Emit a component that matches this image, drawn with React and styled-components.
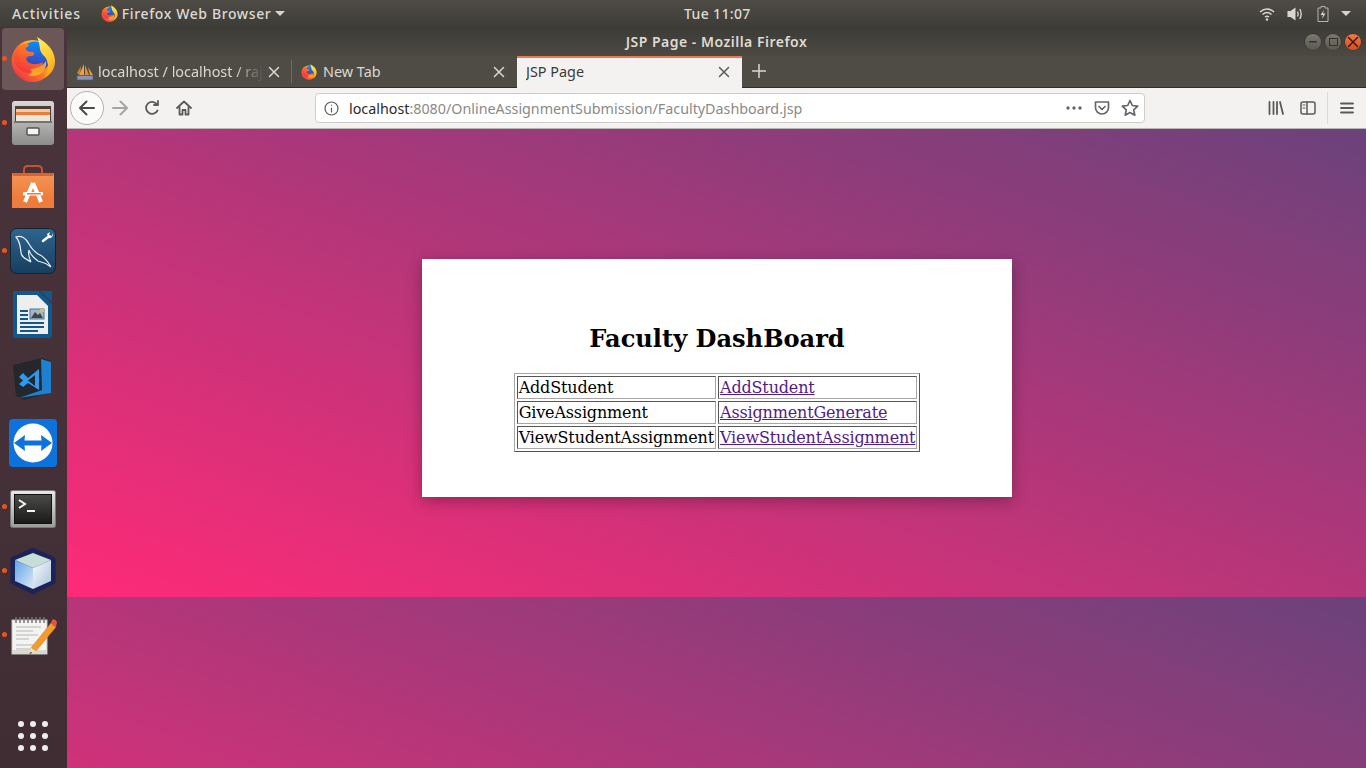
import React from "react";
import styled, { createGlobalStyle } from "styled-components";

const Global = createGlobalStyle`
  html, body { margin: 0; padding: 0; height: 100%; overflow: hidden; background: #3c3b37; }
  * { box-sizing: border-box; }
`;

const uiFont = `"Noto Sans", "Open Sans", "Liberation Sans", sans-serif`;

const Screen = styled.div`
  width: 1366px;
  height: 768px;
  display: flex;
  flex-direction: column;
  overflow: hidden;
  font-family: ${uiFont};
`;

const TopBar = styled.header`
  height: 27px;
  flex: none;
  display: grid;
  grid-template-columns: 672px auto 1fr;
  align-items: center;
  padding-left: 12px;
  background: linear-gradient(#4f4c46, #3d3c37);
  color: #dcdad4;
  font-size: 14px;
  font-weight: 500;
  letter-spacing: 0.35px;
`;

const BarGroup = styled.div`
  display: flex;
  align-items: center;
`;

const ActivitiesLabel = styled.span`
  letter-spacing: 0.85px;
`;

const AppMenu = styled.div`
  display: flex;
  align-items: center;
  margin-left: 20px;
  gap: 4px;
  letter-spacing: 0.62px;
`;

const Caret = styled.span`
  width: 0;
  height: 0;
  border-left: 5px solid transparent;
  border-right: 5px solid transparent;
  border-top: 5px solid #d6d4ce;
`;

const Tray = styled.div`
  display: flex;
  align-items: center;
  justify-content: flex-end;
  padding-right: 15px;
  gap: 12px;
`;

const BatteryGlyph = styled.svg`
  margin-left: 2px;
`;

const Desktop = styled.div`
  flex: 1;
  display: flex;
  min-height: 0;
`;

const Dock = styled.nav`
  width: 67px;
  flex: none;
  display: flex;
  flex-direction: column;
  align-items: flex-start;
  gap: 2px;
  padding: 1px 0 17px 2px;
  background: linear-gradient(#4a343b, #402d34);
`;

const DockItem = styled.div`
  position: relative;
  width: 62px;
  height: 62px;
  border-radius: 4px;
  display: flex;
  align-items: center;
  justify-content: center;
  background: ${(p) => (p.$active ? "#6b5658" : "transparent")};
  ${(p) =>
    p.$running &&
    `&::before {
      content: "";
      position: absolute;
      left: 0;
      top: 28px;
      width: 5px;
      height: 5px;
      border-radius: 50%;
      background: #e95420;
    }`}
`;

const AppGrid = styled.div`
  margin: auto 0 0 16px;
  display: grid;
  grid-template-columns: repeat(3, 6px);
  gap: 6px;
`;

const AppDot = styled.span`
  width: 6px;
  height: 6px;
  border-radius: 50%;
  background: #eeeeee;
`;

const Browser = styled.main`
  flex: 1;
  min-width: 0;
  display: flex;
  flex-direction: column;
`;

const TitleBar = styled.div`
  height: 29px;
  flex: none;
  display: grid;
  grid-template-columns: 1fr auto 1fr;
  align-items: center;
  background: linear-gradient(#3c3b36, #4c4943);
  color: #dfdbd2;
  font-size: 14px;
  font-weight: 600;
  letter-spacing: 0.5px;
`;

const WindowTitle = styled.span`
  grid-column: 2;
`;

const WinButtons = styled.div`
  grid-column: 3;
  display: flex;
  justify-content: flex-end;
  gap: 4px;
  padding-right: 5px;
`;

const WinButton = styled.span`
  width: 16px;
  height: 16px;
  border-radius: 50%;
  display: flex;
  align-items: center;
  justify-content: center;
  background: ${(p) =>
    p.$close
      ? "linear-gradient(#f07a4a, #dd4c1c)"
      : "linear-gradient(#7b7870, #5b5850)"};
  box-shadow: 0 0 0 0.5px rgba(0, 0, 0, 0.35);
`;

const TabStrip = styled.div`
  height: 32px;
  flex: none;
  display: flex;
  align-items: stretch;
  background: #4f4c46;
  border-bottom: 1px solid #2f2e2a;
  color: #dbd8d1;
  font-size: 14.4px;
`;

const Tab = styled.div`
  width: ${(p) => p.$w}px;
  flex: none;
  display: flex;
  align-items: center;
  padding: 0 ${(p) => p.$pr || 12}px ${(p) => (p.$active ? 3 : 2)}px 9px;
  gap: ${(p) => p.$gap || 6}px;
  background: ${(p) => (p.$active ? "#f3f2f0" : "transparent")};
  color: ${(p) => (p.$active ? "#3a3a38" : "inherit")};
  border-top: 2px solid ${(p) => (p.$active ? "#ec7a50" : "transparent")};
  margin-bottom: ${(p) => (p.$active ? "-1px" : "0")};
`;

const TabLabel = styled.span`
  flex: 1;
  min-width: 0;
  white-space: nowrap;
  overflow: hidden;
  ${(p) =>
    p.$fade &&
    `-webkit-mask-image: linear-gradient(to right, #000 82%, transparent 100%);
     mask-image: linear-gradient(to right, #000 82%, transparent 100%);`}
`;

const TabDivider = styled.span`
  width: 1px;
  flex: none;
  margin: 4px 0 4px;
  background: #6e6b64;
`;

const NewTab = styled.div`
  width: 34px;
  padding-bottom: 2px;
  display: flex;
  align-items: center;
  justify-content: center;
`;

const NavBar = styled.div`
  height: 41px;
  flex: none;
  display: flex;
  align-items: center;
  background: #f3f2f0;
  border-bottom: 1px solid #b9b6b3;
  padding-left: 3px;
  color: #5a5a58;
`;

const BackButton = styled.div`
  width: 34px;
  height: 34px;
  flex: none;
  border-radius: 50%;
  background: #fbfbfa;
  border: 1px solid #b4b2af;
  display: flex;
  align-items: center;
  justify-content: center;
`;

const NavIcon = styled.div`
  width: 32px;
  flex: none;
  display: flex;
  align-items: center;
  justify-content: center;
  opacity: ${(p) => (p.$dim ? 0.45 : 1)};
`;

const UrlBox = styled.div`
  width: 830px;
  height: 30px;
  flex: none;
  margin-left: 115px;
  display: flex;
  align-items: center;
  padding: 0 0 0 8px;
  background: #ffffff;
  border: 1px solid #cfcdca;
  border-radius: 4px;
  font-size: 14.3px;
`;

const UrlText = styled.div`
  flex: 1;
  margin-left: 10px;
  white-space: nowrap;
  color: #8a8a88;
`;

const UrlHost = styled.span`
  color: #2b2b2a;
`;

const UrlAction = styled.div`
  width: 28px;
  flex: none;
  display: flex;
  justify-content: center;
`;

const NavRight = styled.div`
  margin-left: auto;
  display: flex;
  align-items: center;
  height: 100%;
  padding-right: 3px;
`;

const NavSeparator = styled.span`
  width: 1px;
  height: 32px;
  margin: 0 3px;
  background: #dcdad7;
`;

const Page = styled.section`
  flex: 1;
  min-height: 0;
  display: flex;
  justify-content: center;
  align-items: flex-start;
  padding-top: 130px;
  background: linear-gradient(to top right, #ff2a78, #6b427b);
  background-size: 100% 468px;
  background-repeat: repeat;
`;

const Card = styled.div`
  width: 590px;
  height: 238px;
  padding: 65px 0 0 1px;
  background: #ffffff;
  box-shadow: 0 4px 14px rgba(0, 0, 0, 0.3);
  font-family: "DejaVu Serif", serif;
  font-size: 16px;
  line-height: 19px;
  color: #000;
  display: flex;
  flex-direction: column;
  align-items: center;
`;

const Heading = styled.h2`
  margin: 0 0 19px;
  font-size: 24.1px;
  line-height: 30px;
  font-weight: 700;
`;

const Table = styled.table`
  border-collapse: separate;
  border-spacing: 2px;
  border: 1px solid;
  border-color: #a6a6a6 #555 #555 #a6a6a6;
  letter-spacing: -0.16px;
`;

const Cell = styled.td`
  padding: 1px;
  border: 1px solid;
  border-color: #555 #a6a6a6 #a6a6a6 #555;
`;

const Visited = styled.a`
  color: #551a8b;
  text-decoration: underline;
`;

function FirefoxLogo({ size = 46 }) {
  const id = `ff${size}`;
  return (
    <svg width={size} height={size} viewBox="0 0 46 46">
      <defs>
        <linearGradient id={`${id}a`} x1="0.85" y1="0.1" x2="0.15" y2="0.9">
          <stop offset="0" stopColor="#ffd33a" />
          <stop offset="0.5" stopColor="#ff8a1c" />
          <stop offset="1" stopColor="#f0324a" />
        </linearGradient>
        <linearGradient id={`${id}b`} x1="0.6" y1="0" x2="0.5" y2="1">
          <stop offset="0" stopColor="#0a8dff" />
          <stop offset="0.6" stopColor="#2f56c8" />
          <stop offset="1" stopColor="#4a2aa5" />
        </linearGradient>
        <linearGradient id={`${id}c`} x1="0.3" y1="0" x2="0.6" y2="1">
          <stop offset="0" stopColor="#ffee55" />
          <stop offset="0.6" stopColor="#ffc52e" />
          <stop offset="1" stopColor="#ff9a1e" />
        </linearGradient>
        <linearGradient id={`${id}d`} x1="0.7" y1="0" x2="0.2" y2="1">
          <stop offset="0" stopColor="#ff8b1e" />
          <stop offset="1" stopColor="#f4303e" />
        </linearGradient>
      </defs>
      <circle cx="22.5" cy="25" r="21" fill={`url(#${id}a)`} />
      <circle cx="25" cy="21" r="15.500" fill={`url(#${id}b)`} />
      <path
        d="M27 1 C33 5 44 11 45 24 C45.500 32 41 39 34 42 C38 36 39 31 37 25 C36 20 31 19 30 13 C29.500 9 29 5 27 1Z"
        fill={`url(#${id}c)`}
      />
      <path
        d="M4 15 C7 10 11 8 15 8 C19 7 20 10 17 11 C14 13 17 16 22 16 C25 16 25 19 22 20 C17 20 15 22 17 25 C20 29 28 29 33 26 C31 34 22 39 14 36 C6 33 2 24 4 15Z"
        fill={`url(#${id}d)`}
      />
      <path d="M20 33 C26 33 33 30 36 25 C38 34 28 43 18 39 C22 38 23 36 20 33Z" fill="#ffad27" opacity="0.9" />
    </svg>
  );
}

const FilesIcon = () => (
  <svg width="44" height="44" viewBox="0 0 44 44">
    <defs>
      <linearGradient id="fa" x1="0" y1="0" x2="0" y2="1">
        <stop offset="0" stopColor="#d8d8d6" />
        <stop offset="1" stopColor="#8c8c8a" />
      </linearGradient>
    </defs>
    <rect x="1" y="0" width="42" height="44" rx="3" fill="url(#fa)" />
    <rect x="4" y="5" width="36" height="16" fill="#4c4038" />
    <rect x="5" y="8" width="34" height="3" fill="#f4c9a0" />
    <rect x="5" y="11" width="34" height="3" fill="#e87f3a" />
    <rect x="5" y="14" width="34" height="6" fill="#ece6de" />
    <rect x="3" y="20" width="38" height="2" fill="#77746f" />
    <rect x="16" y="27" width="12" height="7" rx="1" fill="#f5f5f5" stroke="#555" strokeWidth="1.500" />
  </svg>
);

const BagIcon = () => (
  <svg width="44" height="44" viewBox="0 0 44 44">
    <defs>
      <linearGradient id="ba" x1="0" y1="0" x2="0" y2="1">
        <stop offset="0" stopColor="#f39555" />
        <stop offset="1" stopColor="#ee7430" />
      </linearGradient>
    </defs>
    <path d="M13 10 V5 Q13 1 17 1 H27 Q31 1 31 5 V10" fill="none" stroke="#c9522a" strokeWidth="2" />
    <path d="M1 8 H43 V43 H1Z" fill="url(#ba)" />
    <path d="M1 32 H43 V43 H1Z" fill="#ee7c3c" />
    <path d="M1 8 H43 L42 11 H2Z" fill="#d9622f" />
    <path d="M22 18 L14 37 M22 18 L30 37" stroke="#fff" strokeWidth="4" fill="none" />
    <rect x="12" y="27" width="20" height="3.500" rx="1" fill="#fff" />
    <rect x="16" y="28" width="14" height="1.500" fill="#ee7c3c" />
  </svg>
);

const MysqlIcon = () => (
  <svg width="46" height="46" viewBox="0 0 46 46">
    <defs>
      <linearGradient id="ma" x1="0" y1="0" x2="0" y2="1">
        <stop offset="0" stopColor="#2d6590" />
        <stop offset="1" stopColor="#173e5e" />
      </linearGradient>
    </defs>
    <rect x="0.500" y="0.500" width="45" height="45" rx="6" fill="url(#ma)" stroke="#16222d" />
    <path
      d="M6 9 C11 7 16 10 19 16 C21 20 24 23 28 26 C33 28 37 32 41 39 C37 36 33 34 28 33 C24 30 20 27 19 22 C18 26 19 30 21 34 C17 31 11 30 11 24 C10 20 11 15 6 9Z"
      fill="none"
      stroke="#e6eef4"
      strokeWidth="1.200"
    />
    <path d="M33 13 L38 9" stroke="#fff" strokeWidth="2.500" strokeLinecap="round" />
    <path d="M38 9 L37 6 L40 4 L39 7 L42 8 L43 5 A4 4 0 0 1 38 10Z" fill="#fff" />
  </svg>
);

const WriterIcon = () => (
  <svg width="42" height="50" viewBox="0 0 42 50">
    <path d="M3 1 H27 L40 14 V45 Q40 48 37 48 H3 Q1 48 1 45 V3 Q1 1 3 1Z" fill="#11598c" />
    <path d="M5 5 H25 L36 16 V44 H5Z" fill="#eeeeec" />
    <path d="M28 1 H40 V12Z" fill="#11598c" />
    <rect x="8" y="20" width="8" height="2" fill="#11598c" />
    <rect x="8" y="24" width="8" height="2" fill="#11598c" />
    <rect x="8" y="28" width="8" height="2" fill="#11598c" />
    <rect x="8" y="32" width="24" height="2" fill="#11598c" />
    <rect x="8" y="36" width="24" height="2" fill="#11598c" />
    <rect x="8" y="40" width="18" height="2" fill="#11598c" />
    <rect x="18" y="19" width="14" height="10" fill="#9fb7c9" stroke="#4c7597" />
    <path d="M19 28 L23 22 L26 25 L28 23 L31 28Z" fill="#444" />
    <rect x="28" y="19" width="4" height="3" fill="#e0c24a" />
  </svg>
);

const VscodeIcon = () => (
  <svg width="42" height="44" viewBox="0 0 42 44">
    <path d="M1 8 L30 1 L39 4 V35 L12 43 L4 39Z" fill="#24272b" />
    <path d="M29 2 L39 5 V36 L7 41 L30 33Z" fill="#1f80cf" />
    <path d="M7 20 L11 16 L16 21 L27 12 V33 L16 26 L11 30 L7 27 L11 23.500Z" fill="#2b9af3" />
    <path d="M16 23.500 L23 18 V29Z" fill="#24272b" />
  </svg>
);

const TeamviewerIcon = () => (
  <svg width="48" height="48" viewBox="0 0 48 48">
    <rect width="48" height="48" rx="4" fill="#0e72dc" />
    <circle cx="24" cy="24" r="19.500" fill="#fff" />
    <path d="M5 24 L16 16 L15.500 21.500 H32.500 L32 16 L43 24 L32 32 L32.500 26.500 H15.500 L16 32Z" fill="#0e72dc" />
  </svg>
);

const TerminalIcon = () => (
  <svg width="46" height="42" viewBox="0 -4 46 42">
    <defs>
      <linearGradient id="ta" x1="0" y1="0" x2="0" y2="1">
        <stop offset="0" stopColor="#e8e8e6" />
        <stop offset="1" stopColor="#9a9a98" />
      </linearGradient>
      <linearGradient id="tb" x1="0" y1="0" x2="0" y2="1">
        <stop offset="0" stopColor="#4a4a48" />
        <stop offset="1" stopColor="#1a1a19" />
      </linearGradient>
    </defs>
    <rect x="0.500" y="0.500" width="45" height="37" rx="2" fill="url(#ta)" stroke="#777" />
    <rect x="4" y="4" width="38" height="30" fill="#111" />
    <rect x="5" y="5" width="36" height="28" fill="url(#tb)" />
    <path d="M9 10 L15 14 L9 18" fill="none" stroke="#f4f4f4" strokeWidth="2" />
    <rect x="17" y="20" width="8" height="2" fill="#f4f4f4" />
  </svg>
);

const NetbeansIcon = () => (
  <svg width="46" height="48" viewBox="0 0 46 48">
    <defs>
      <linearGradient id="na" x1="0" y1="0" x2="1" y2="1">
        <stop offset="0" stopColor="#5fa4ea" />
        <stop offset="1" stopColor="#dfe9f2" />
      </linearGradient>
      <linearGradient id="nb" x1="0" y1="0" x2="1" y2="1">
        <stop offset="0" stopColor="#f8fafc" />
        <stop offset="1" stopColor="#a9c2dc" />
      </linearGradient>
    </defs>
    <path d="M23 1 L45 11 V36 L23 47 L1 36 V11Z" fill="#1b2358" stroke="#1b2358" strokeLinejoin="round" />
    <path d="M23 6 L41 13 L23 21 L5 13Z" fill="#c7ddd8" />
    <path d="M5 13 L23 21 V42 L5 34Z" fill="url(#na)" />
    <path d="M41 13 L23 21 V42 L41 34Z" fill="url(#nb)" />
  </svg>
);

const GeditIcon = () => (
  <svg width="48" height="41" viewBox="-2 -1 48 41">
    <rect x="1" y="4" width="35" height="34" fill="#f4f4f2" stroke="#c5c5c2" />
    <rect x="1" y="34" width="35" height="4" fill="#d8d8d5" />
    <g fill="none" stroke="#777" strokeWidth="1.500">
      <path d="M5 1 V7 M9 1 V7 M13 1 V7 M17 1 V7 M21 1 V7 M25 1 V7 M29 1 V7 M33 1 V7" />
    </g>
    <g stroke="#b5b5b3" strokeWidth="1">
      <path d="M5 11 H30 M5 15 H22 M5 19 H27 M5 23 H18 M5 29 H28 M5 33 H20" />
    </g>
    <path d="M20 32 L40 7 L45 11 L25 35Z" fill="#f59b2d" stroke="#c9741a" strokeWidth="0.500" />
    <path d="M20 32 L25 35 L18 38Z" fill="#f3dcb8" />
    <path d="M18 38 L20 36 L21 37Z" fill="#111" />
    <path d="M40 7 L45 11 L46 6 Q44 2 41 4Z" fill="#e4524e" />
  </svg>
);

const PmaIcon = () => (
  <svg width="18" height="18" viewBox="0 0 18 18">
    <path d="M8 1 L3 12 H8Z" fill="#f0a040" />
    <path d="M9 2 L9 12 H13Z" fill="#e88a2a" />
    <path d="M12 4 L14 12 H17Z" fill="#e0a050" />
    <path d="M1 10 L5 3 L4 12Z" fill="#cf8030" />
    <rect x="1" y="12.500" width="16" height="4.500" fill="#8a93b8" stroke="#4b5688" strokeWidth="0.700" />
  </svg>
);

const Stroke = ({ w = 18, h = 18, vb = "0 0 18 18", c = "currentColor", sw = 2, children }) => (
  <svg width={w} height={h} viewBox={vb} fill="none" stroke={c} strokeWidth={sw} strokeLinecap="round" strokeLinejoin="round">
    {children}
  </svg>
);

const CloseGlyph = ({ c }) => (
  <Stroke w={12} h={12} vb="0 0 12 12" c={c} sw={1.500}>
    <path d="M1.500 1.500 L10.500 10.500 M10.500 1.500 L1.500 10.500" />
  </Stroke>
);

const dockApps = [
  { node: <FirefoxLogo />, running: true, active: true },
  { node: <FilesIcon />, running: true },
  { node: <BagIcon /> },
  { node: <MysqlIcon />, running: true },
  { node: <WriterIcon /> },
  { node: <VscodeIcon /> },
  { node: <TeamviewerIcon /> },
  { node: <TerminalIcon />, running: true },
  { node: <NetbeansIcon />, running: true },
  { node: <GeditIcon />, running: true },
];

const rows = [
  ["AddStudent", "AddStudent"],
  ["GiveAssignment", "AssignmentGenerate"],
  ["ViewStudentAssignment", "ViewStudentAssignment"],
];

export default function App() {
  return (
    <>
      <Global />
      <Screen>
        <TopBar>
          <BarGroup>
            <ActivitiesLabel>Activities</ActivitiesLabel>
            <AppMenu>
              <FirefoxLogo size={17} />
              <span>Firefox Web Browser</span>
              <Caret />
            </AppMenu>
          </BarGroup>
          <span>Tue 11:07</span>
          <Tray>
            <svg width="16" height="14" viewBox="0 0 16 14" fill="none" stroke="#d8d6d0" strokeWidth="1.500">
              <path d="M1 5 Q8 -1 15 5" />
              <path d="M3.500 7.500 Q8 3.500 12.500 7.500" />
              <path d="M6 10 Q8 8.500 10 10" />
              <circle cx="8" cy="12.500" r="1.200" fill="#d8d6d0" stroke="none" />
            </svg>
            <svg width="16" height="14" viewBox="0 0 16 14" fill="none" stroke="#d8d6d0" strokeWidth="1.400">
              <path d="M0.500 4 H3.500 L8.500 0.500 V13.500 L3.500 10 H0.500Z" fill="#d8d6d0" stroke="none" />
              <path d="M10.500 4.500 Q12 7 10.500 9.500" />
              <path d="M12.800 2 Q15.500 7 12.800 12" />
            </svg>
            <BatteryGlyph width="12" height="16" viewBox="0 0 12 16">
              <path d="M4 0.500 H8 V2 H11 V15.500 H1 V2 H4Z" fill="none" stroke="#b5b3ad" strokeWidth="1" />
              <path d="M7 4 L3.500 9 H6 L5 13 L8.500 7.500 H6Z" fill="#d8d6d0" />
            </BatteryGlyph>
            <Caret />
          </Tray>
        </TopBar>
        <Desktop>
          <Dock>
            {dockApps.map((app, i) => (
              <DockItem key={i} $active={app.active} $running={app.running}>
                {app.node}
              </DockItem>
            ))}
            <AppGrid>
              {Array.from({ length: 9 }).map((_, i) => (
                <AppDot key={i} />
              ))}
            </AppGrid>
          </Dock>
          <Browser>
            <TitleBar>
              <WindowTitle>JSP Page - Mozilla Firefox</WindowTitle>
              <WinButtons>
                <WinButton>
                  <svg width="8" height="2"><rect width="8" height="1.500" fill="#33322e" /></svg>
                </WinButton>
                <WinButton>
                  <svg width="9" height="8"><rect x="0.500" y="0.500" width="8" height="7" fill="none" stroke="#33322e" /></svg>
                </WinButton>
                <WinButton $close>
                  <CloseGlyph c="#3a1a0c" />
                </WinButton>
              </WinButtons>
            </TitleBar>
            <TabStrip>
              <Tab $w={224} $gap={4} $pr={11}>
                <PmaIcon />
                <TabLabel $fade>localhost / localhost / raj</TabLabel>
                <CloseGlyph c="#dbd8d1" />
              </Tab>
              <TabDivider />
              <Tab $w={225}>
                <FirefoxLogo size={16} />
                <TabLabel>New Tab</TabLabel>
                <CloseGlyph c="#dbd8d1" />
              </Tab>
              <Tab $w={225} $active>
                <TabLabel>JSP Page</TabLabel>
                <CloseGlyph c="#5a5a58" />
              </Tab>
              <NewTab>
                <Stroke w={14} h={14} vb="0 0 14 14" c="#dbd8d1" sw={1.500}>
                  <path d="M7 0.500 V13.500 M0.500 7 H13.500" />
                </Stroke>
              </NewTab>
            </TabStrip>
            <NavBar>
              <BackButton>
                <Stroke c="#4a4a48">
                  <path d="M16 9 H2 M8.500 2.500 L2 9 L8.500 15.500" />
                </Stroke>
              </BackButton>
              <NavIcon $dim>
                <Stroke c="#4a4a48">
                  <path d="M2 9 H16 M9.500 2.500 L16 9 L9.500 15.500" />
                </Stroke>
              </NavIcon>
              <NavIcon>
                <Stroke w={16} h={16} vb="0 0 16 16" sw={1.800}>
                  <path d="M13.500 10.500 A6 6 0 1 1 13 4.500 M14 1 V5 H10" />
                </Stroke>
              </NavIcon>
              <NavIcon>
                <Stroke w={16} h={16} vb="0 0 16 16" sw={1.800}>
                  <path d="M1 8 L8 1.500 L15 8 M3.500 6.500 V14.500 H6.500 V10 H9.500 V14.500 H12.500 V6.500" />
                </Stroke>
              </NavIcon>
              <UrlBox>
                <Stroke w={15} h={15} vb="0 0 15 15" sw={1.200} c="#5a5a58">
                  <circle cx="7.500" cy="7.500" r="6.500" />
                  <path d="M7.500 7 V11 M7.500 4 V4.200" />
                </Stroke>
                <UrlText>
                  <UrlHost>localhost</UrlHost>:8080/OnlineAssignmentSubmission/FacultyDashboard.jsp
                </UrlText>
                <UrlAction>
                  <svg width="16" height="4" viewBox="0 0 16 4" fill="#666">
                    <circle cx="2" cy="2" r="1.700" />
                    <circle cx="8" cy="2" r="1.700" />
                    <circle cx="14" cy="2" r="1.700" />
                  </svg>
                </UrlAction>
                <UrlAction>
                  <Stroke w={16} h={16} vb="0 0 16 16" sw={1.700} c="#666">
                    <path d="M1.500 2 H14.500 V7.500 A6.500 6.500 0 0 1 1.500 7.500Z M5 6.500 L8 9.500 L11 6.500" />
                  </Stroke>
                </UrlAction>
                <UrlAction>
                  <Stroke w={18} h={18} vb="0 0 18 18" sw={1.700} c="#666">
                    <path d="M9 1.500 L11.300 6.500 L16.700 7.100 L12.700 10.800 L13.800 16.200 L9 13.500 L4.200 16.200 L5.300 10.800 L1.300 7.100 L6.700 6.500Z" />
                  </Stroke>
                </UrlAction>
              </UrlBox>
              <NavRight>
                <NavIcon>
                  <Stroke w={16} h={14} vb="0 0 16 14" sw={1.800} c="#5a5a58">
                    <path d="M1.500 1 V13 M5.500 1 V13 M9 1 V13 M12 1 L15 13" />
                  </Stroke>
                </NavIcon>
                <NavIcon>
                  <Stroke w={16} h={14} vb="0 0 16 14" sw={1.500} c="#5a5a58">
                    <rect x="1" y="1" width="14" height="12" rx="2" />
                    <path d="M7 1 V13" />
                    <path d="M3 4 H5 M3 7 H5" strokeWidth="1" />
                  </Stroke>
                </NavIcon>
                <NavSeparator />
                <NavIcon>
                  <Stroke w={14} h={12} vb="0 0 14 12" sw={1.800} c="#5a5a58">
                    <path d="M1 1.500 H13 M1 6 H13 M1 10.500 H13" />
                  </Stroke>
                </NavIcon>
              </NavRight>
            </NavBar>
            <Page>
              <Card>
                <Heading>Faculty DashBoard</Heading>
                <Table>
                  <tbody>
                    {rows.map(([label, link]) => (
                      <tr key={label + link}>
                        <Cell>{label}</Cell>
                        <Cell>
                          <Visited href="#">{link}</Visited>
                        </Cell>
                      </tr>
                    ))}
                  </tbody>
                </Table>
              </Card>
            </Page>
          </Browser>
        </Desktop>
      </Screen>
    </>
  );
}
